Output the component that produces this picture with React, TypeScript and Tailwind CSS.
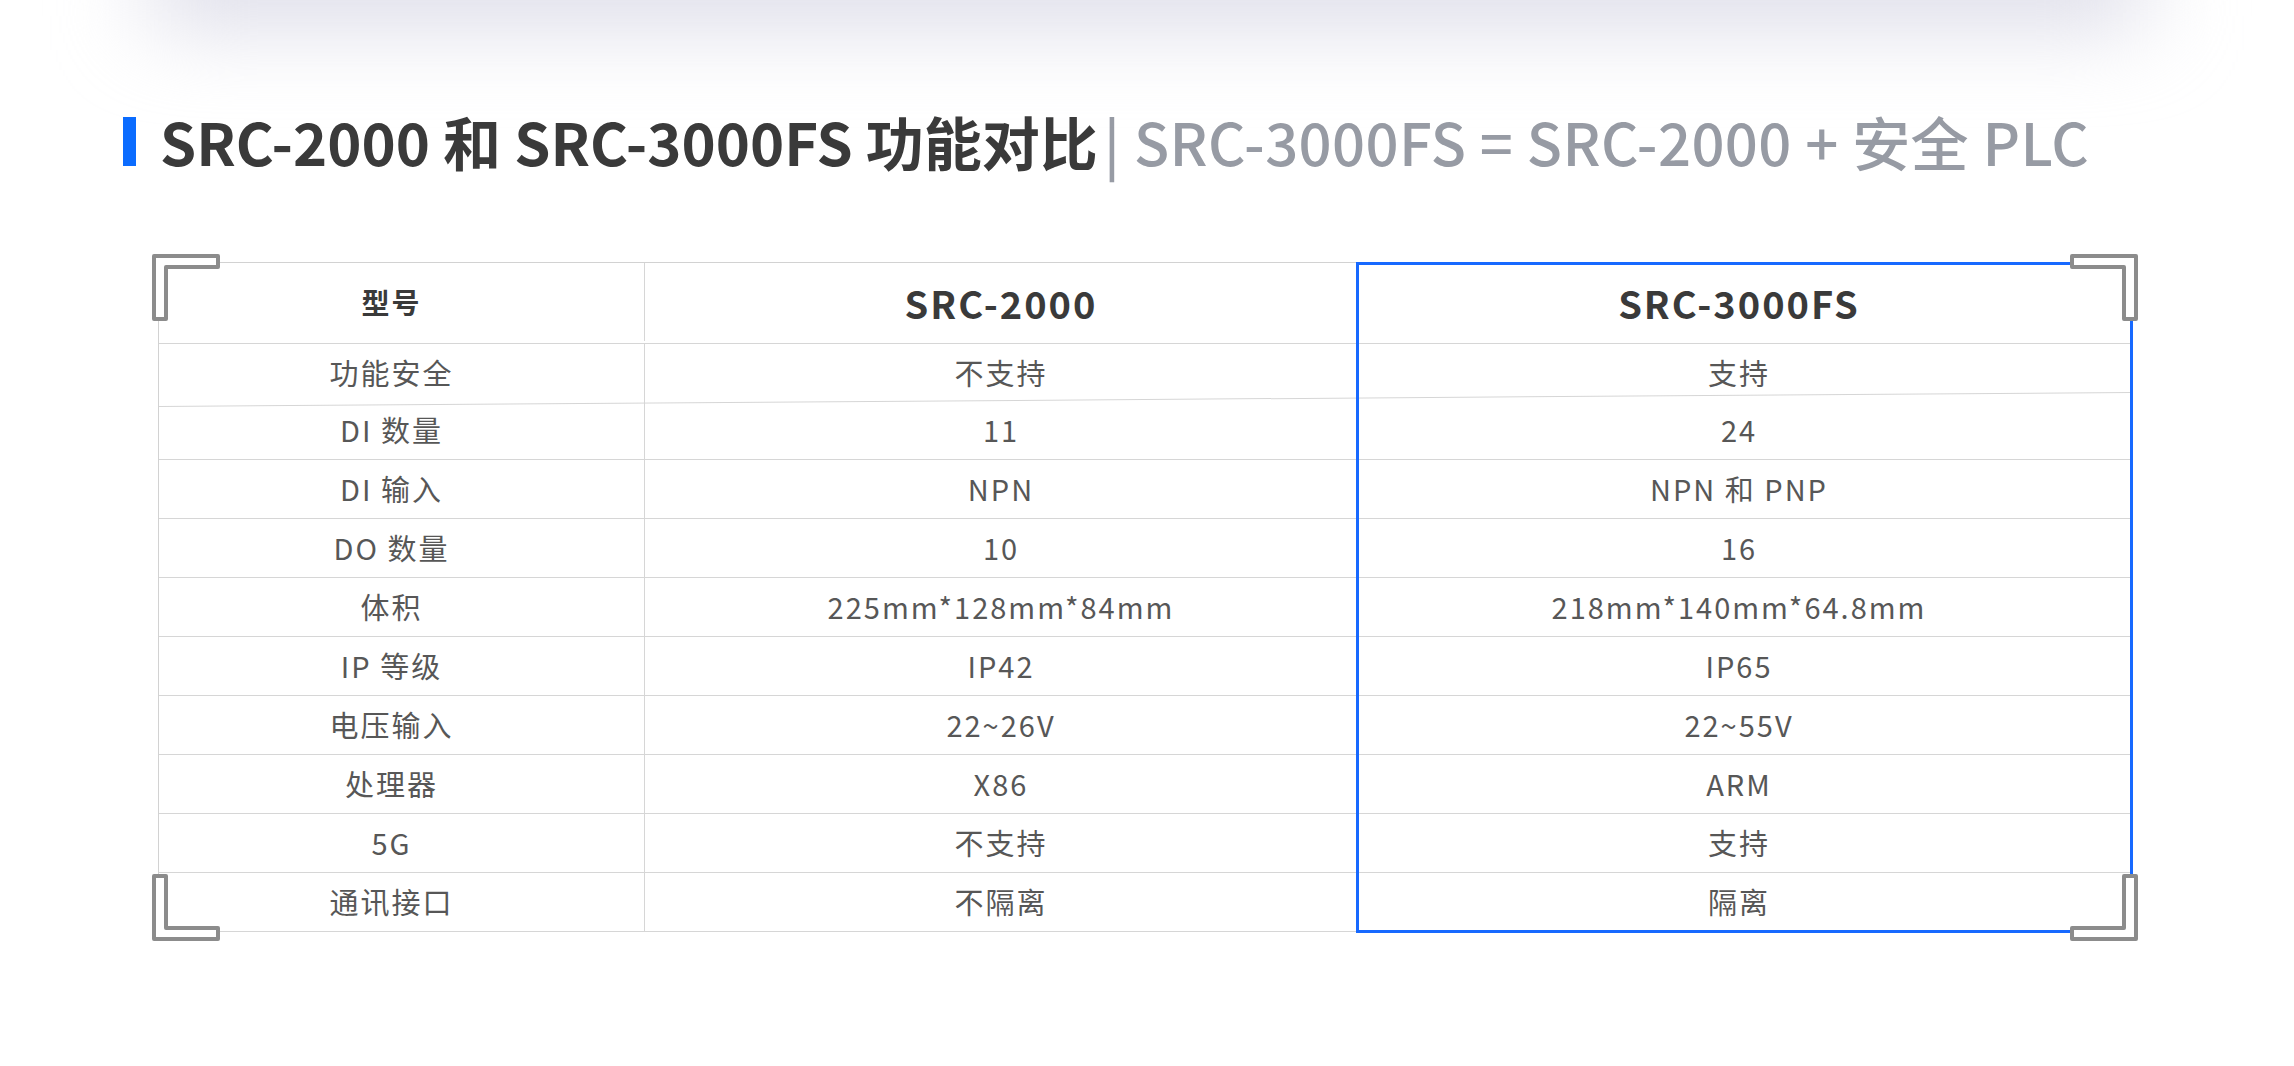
import React from "react";

const rows: [string, string, string][] = [
  ["功能安全", "不支持", "支持"],
  ["DI 数量", "11", "24"],
  ["DI 输入", "NPN", "NPN 和 PNP"],
  ["DO 数量", "10", "16"],
  ["体积", "225mm*128mm*84mm", "218mm*140mm*64.8mm"],
  ["IP 等级", "IP42", "IP65"],
  ["电压输入", "22~26V", "22~55V"],
  ["处理器", "X86", "ARM"],
  ["5G", "不支持", "支持"],
  ["通讯接口", "不隔离", "隔离"],
];

function Corner({ pos }: { pos: "tl" | "tr" | "bl" | "br" }) {
  const paths = {
    tl: "M2 2 H66 V13 H14 V65 H2 Z",
    tr: "M2 2 H66 V65 H54 V13 H2 Z",
    bl: "M2 2 H14 V54 H66 V65 H2 Z",
    br: "M54 2 H66 V65 H2 V54 H54 Z",
  };
  const place = {
    tl: "-left-[7px] -top-[9px]",
    tr: "-right-[6px] -top-[9px]",
    bl: "-left-[7px] -bottom-[9px]",
    br: "-right-[6px] -bottom-[9px]",
  };
  return (
    <svg
      width="68"
      height="67"
      viewBox="0 0 68 67"
      className={`absolute ${place[pos]}`}
    >
      <path
        d={paths[pos]}
        fill="#ffffff"
        stroke="#8c8c8c"
        strokeWidth="4"
        strokeLinejoin="round"
      />
    </svg>
  );
}

export default function App() {
  return (
    <div
      className="w-full min-h-screen bg-white overflow-hidden"
      style={{ fontFamily: '"Noto Sans CJK SC", "Noto Sans", sans-serif' }}
    >
      <div className="h-[80px] -mt-[60px] mx-[150px] bg-[#d6d6e4] blur-[45px]" />

      <div className="flex items-center h-[58px] mt-[92px] pl-[123px]">
        <div className="w-[13px] h-[49px] bg-[#0b6cff]" />
        <h1 className="ml-[24px] text-[58px] leading-none font-bold text-[#3a3a3a] whitespace-nowrap">
          SRC-2000 和 SRC-3000FS 功能对比
        </h1>
        <span className="ml-[6px] text-[58px] leading-none font-medium tracking-[0.4px] text-[#979ba4] whitespace-nowrap">
          | SRC-3000FS = SRC-2000 + 安全 PLC
        </span>
      </div>

      <div className="relative mt-[92px] ml-[158px] w-[1974px] border-t border-l border-[#d2d2d2]">
        <div className="grid grid-cols-[486px_712px_776px] h-[81px] pb-[2px] border-b border-[#d6d6d6]">
          <div className="flex items-center justify-center pr-[20px] border-r border-[#d6d6d6] text-[28px] font-bold tracking-[2px] text-[#3a3a3a]">
            型号
          </div>
          <div className="flex items-center justify-center text-[38px] font-bold tracking-[2px] text-[#3a3a3a]">
            SRC-2000
          </div>
          <div className="flex items-center justify-center pr-[12px] text-[38px] font-bold tracking-[2px] text-[#3a3a3a]">
            SRC-3000FS
          </div>
        </div>

        {rows.map((r, i) => (
          <div
            key={i}
            className={
              i === 0
                ? "relative grid grid-cols-[486px_712px_776px] h-[57px]"
                : "grid grid-cols-[486px_712px_776px] h-[59px] border-b border-[#d6d6d6]"
            }
          >
            <div className="flex items-center justify-center pr-[20px] border-r border-[#d6d6d6] text-[29px] tracking-[2px] text-[#575757]">
              {r[0]}
            </div>
            <div className="flex items-center justify-center text-[29px] tracking-[2px] text-[#575757]">
              {r[1]}
            </div>
            <div className="flex items-center justify-center pr-[12px] text-[29px] tracking-[2px] text-[#575757]">
              {r[2]}
            </div>
            {i === 0 && (
              <div className="absolute left-0 right-0 bottom-[1px] h-px bg-[#d6d6d6] -rotate-[0.4deg]" />
            )}
          </div>
        ))}

        <div className="absolute -top-px -bottom-px -right-px w-[777px] border-[3px] border-[#1769ff] pointer-events-none" />

        <Corner pos="tl" />
        <Corner pos="tr" />
        <Corner pos="bl" />
        <Corner pos="br" />
      </div>
    </div>
  );
}
